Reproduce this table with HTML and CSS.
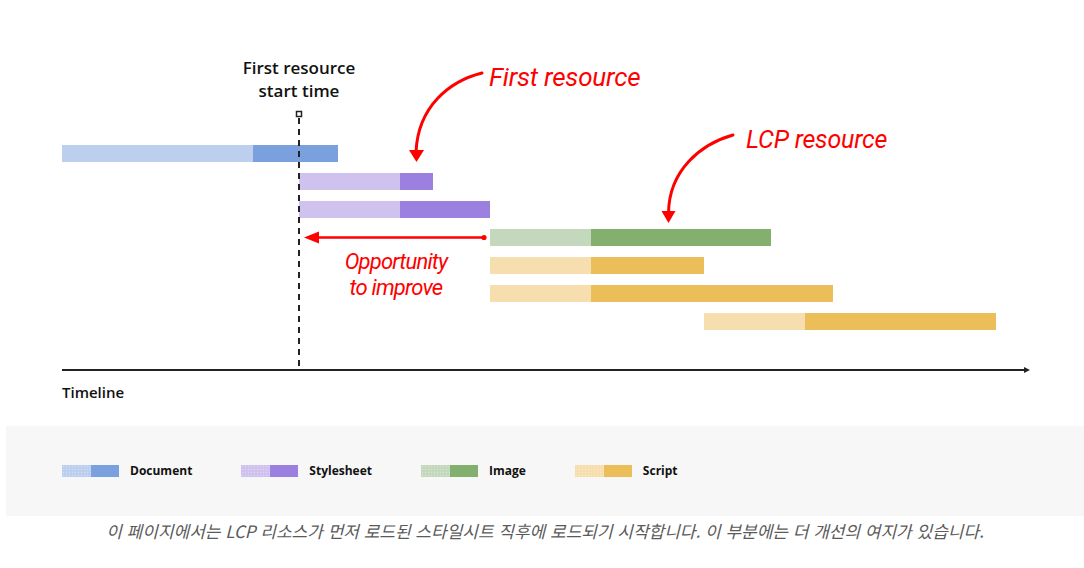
FILE: index.html
```html
<!DOCTYPE html>
<html lang="ko">
<head>
<meta charset="utf-8">
<title>LCP resource timeline</title>
<link rel="stylesheet" href="styles.css">
</head>
<body>
<div class="figure">
  <div class="chart">
    <div class="rows">
      <div class="bar doc" style="margin-left:0px"><span class="seg light" style="width:191px"></span><span class="seg dark" style="width:85px"></span></div>
      <div class="bar sheet" style="margin-left:237px"><span class="seg light" style="width:101px"></span><span class="seg dark" style="width:33px"></span></div>
      <div class="bar sheet" style="margin-left:237px"><span class="seg light" style="width:101px"></span><span class="seg dark" style="width:90px"></span></div>
      <div class="bar image" style="margin-left:428px"><span class="seg light" style="width:101px"></span><span class="seg dark" style="width:180px"></span></div>
      <div class="bar script" style="margin-left:428px"><span class="seg light" style="width:101px"></span><span class="seg dark" style="width:113px"></span></div>
      <div class="bar script" style="margin-left:428px"><span class="seg light" style="width:101px"></span><span class="seg dark" style="width:242px"></span></div>
      <div class="bar script" style="margin-left:642px"><span class="seg light" style="width:101px"></span><span class="seg dark" style="width:191px"></span></div>
    </div>
    <div class="axis"></div>
    <div class="axis-label">Timeline</div>

    <svg class="overlay" width="1084" height="426" viewBox="0 0 1084 426" aria-hidden="true">
      <line x1="299" y1="118" x2="299" y2="371" stroke="#222" stroke-width="2" stroke-dasharray="6 5"/>
      <rect x="296.5" y="111.5" width="5" height="5" fill="#fff" stroke="#222" stroke-width="1.5"/>
      <path d="M482,73 C450,81 418,106 416,152" fill="none" stroke="#f00" stroke-width="3" stroke-linecap="round"/>
      <polygon points="409,150 424,150 416.5,162" fill="#f00"/>
      <path d="M733,135 C701,144 669,170 668.5,213" fill="none" stroke="#f00" stroke-width="3" stroke-linecap="round"/>
      <polygon points="661.5,211 675.5,211 668.5,223" fill="#f00"/>
      <line x1="316" y1="237.5" x2="484" y2="237.5" stroke="#f00" stroke-width="2.5" stroke-linecap="round"/>
      <circle cx="484" cy="237.5" r="2.6" fill="#f00"/>
      <polygon points="304,237.5 319,231.5 319,243.5" fill="#f00"/>
    </svg>

    <div class="marker-label">First resource<br>start time</div>
    <div class="note note-first">First resource</div>
    <div class="note note-lcp">LCP resource</div>
    <div class="note note-opp">Opportunity<br>to improve</div>
  </div>

  <div class="legend">
    <div class="legend-item"><span class="swatch doc"><span class="light"></span><span class="dark"></span></span><span class="legend-text">Document</span></div>
    <div class="legend-item"><span class="swatch sheet"><span class="light"></span><span class="dark"></span></span><span class="legend-text">Stylesheet</span></div>
    <div class="legend-item"><span class="swatch image"><span class="light"></span><span class="dark"></span></span><span class="legend-text">Image</span></div>
    <div class="legend-item"><span class="swatch script"><span class="light"></span><span class="dark"></span></span><span class="legend-text">Script</span></div>
  </div>

  <p class="caption">이 페이지에서는 LCP 리소스가 먼저 로드된 스타일시트 직후에 로드되기 시작합니다. 이 부분에는 더 개선의 여지가 있습니다.</p>
</div>
</body>
</html>
```

FILE: styles.css
```css
html, body {
  margin: 0;
  padding: 0;
  background: #fff;
}

body {
  width: 1084px;
  height: 568px;
  overflow: hidden;
  font-family: "Open Sans", "Noto Sans", sans-serif;
  color: #111;
}

.figure {
  display: flex;
  flex-direction: column;
}

/* ---------- chart ---------- */
.chart {
  position: relative;
  height: 426px;
}

.rows {
  display: flex;
  flex-direction: column;
  gap: 11px;
  padding-top: 145px;
  padding-left: 62px;
}

.bar {
  display: flex;
  height: 17px;
}

.seg {
  display: block;
  height: 100%;
}

.doc .light { background: #bccfee; }
.doc .dark { background: #7aa0de; }
.sheet .light { background: #cfc2ef; }
.sheet .dark { background: #9b80e0; }
.image .light { background: #c4d8be; }
.image .dark { background: #84b06f; }
.script .light { background: #f6deae; }
.script .dark { background: #ecbe5a; }

.axis {
  position: relative;
  margin-top: 39px;
  margin-left: 62px;
  width: 962px;
  height: 2px;
  background: #222;
}

.axis::after {
  content: "";
  position: absolute;
  right: -6px;
  top: -2px;
  border-left: 6px solid #222;
  border-top: 3px solid transparent;
  border-bottom: 3px solid transparent;
}

.axis-label {
  margin-top: 11px;
  margin-left: 62px;
  font-size: 15px;
  line-height: 20px;
  font-weight: 600;
  color: #111;
}

.overlay {
  position: absolute;
  left: 0;
  top: 0;
  pointer-events: none;
}

.marker-label {
  position: absolute;
  left: 219px;
  top: 56px;
  width: 160px;
  text-align: center;
  font-size: 17px;
  line-height: 23px;
  font-weight: 600;
  color: #111;
}

.note {
  position: absolute;
  color: #f00;
  font-family: Roboto, "Liberation Sans", sans-serif;
  font-style: italic;
  font-weight: 400;
  white-space: nowrap;
}

.note-first {
  left: 489px;
  top: 64px;
  font-size: 26px;
  line-height: 26px;
  letter-spacing: -0.2px;
}

.note-lcp {
  left: 746px;
  top: 127px;
  font-size: 25px;
  line-height: 25px;
  letter-spacing: -0.2px;
}

.note-opp {
  left: 326px;
  top: 249px;
  width: 140px;
  text-align: center;
  font-size: 22px;
  line-height: 26px;
  letter-spacing: -0.8px;
}

/* ---------- legend ---------- */
.legend {
  margin-left: 6px;
  height: 90px;
  background: #f7f7f7;
  display: flex;
  align-items: center;
  gap: 49px;
  padding-left: 56px;
}

.legend-item {
  display: flex;
  align-items: center;
  gap: 11px;
}

.swatch {
  display: flex;
  width: 57px;
  height: 12px;
}

.swatch .light {
  width: 29px;
  background-image: radial-gradient(rgba(255, 255, 255, 0.35) 0.6px, transparent 0.9px);
  background-size: 3px 3px;
}

.swatch .dark {
  width: 28px;
}

.legend-text {
  font-size: 12px;
  line-height: 16px;
  font-weight: 700;
  color: #111;
}

/* ---------- caption ---------- */
.caption {
  margin: 0 0 0 6px;
  padding-top: 3px;
  text-align: center;
  font-family: "Noto Sans CJK KR", "Noto Sans", sans-serif;
  font-style: italic;
  font-size: 17px;
  line-height: 24px;
  color: #5a5a5a;
}
```
